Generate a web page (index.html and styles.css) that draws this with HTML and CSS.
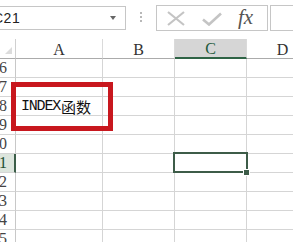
FILE: index.html
```html
<!DOCTYPE html>
<html>
<head>
<meta charset="utf-8">
<link rel="stylesheet" href="styles.css">
</head>
<body>
<div class="app">
  <div class="fbar">
    <div class="namebox"><span class="name">C21</span><span class="dd"></span></div>
    <div class="dots"><i></i><i></i><i></i></div>
    <div class="btns">
      <svg class="ic-x" width="18" height="15" viewBox="0 0 18 15"><path d="M1 1L17 14M17 1L1 14" stroke="#c4c4c4" stroke-width="2.2" fill="none"/></svg>
      <svg class="ic-ok" width="20" height="14" viewBox="0 0 20 14"><path d="M1 7.5L7 12.5L19 1.5" stroke="#c4c4c4" stroke-width="2.6" fill="none"/></svg>
      <span class="fx">fx</span>
    </div>
    <div class="fin"></div>
  </div>
  <div class="grid">
    <div class="corner"><span class="tri"></span></div>
    <div class="ch">A</div><div class="ch">B</div><div class="ch sel">C</div><div class="ch">D</div>

    <div class="rh"><span>16</span></div><div class="c"></div><div class="c"></div><div class="c"></div><div class="c"></div>
    <div class="rh"><span>17</span></div><div class="c"></div><div class="c"></div><div class="c"></div><div class="c"></div>
    <div class="rh"><span>18</span></div><div class="c txt"><span class="lat">INDEX</span><span class="cjk">函数</span></div><div class="c"></div><div class="c"></div><div class="c"></div>
    <div class="rh"><span>19</span></div><div class="c"></div><div class="c"></div><div class="c"></div><div class="c"></div>
    <div class="rh"><span>20</span></div><div class="c"></div><div class="c"></div><div class="c"></div><div class="c"></div>
    <div class="rh sel"><span>21</span></div><div class="c"></div><div class="c"></div><div class="c active"></div><div class="c"></div>
    <div class="rh"><span>22</span></div><div class="c"></div><div class="c"></div><div class="c"></div><div class="c"></div>
    <div class="rh"><span>23</span></div><div class="c"></div><div class="c"></div><div class="c"></div><div class="c"></div>
    <div class="rh"><span>24</span></div><div class="c"></div><div class="c"></div><div class="c"></div><div class="c"></div>
    <div class="rh"><span>25</span></div><div class="c"></div><div class="c"></div><div class="c"></div><div class="c"></div>
  </div>
  <div class="redbox"></div>
</div>
</body>
</html>
```

FILE: styles.css
```css
html, body {
  margin: 0;
  padding: 0;
  background: #fff;
  overflow: hidden;
}
.app {
  position: relative;
  width: 293px;
  height: 242px;
  overflow: hidden;
}
.fbar {
  height: 39px;
  display: flex;
  align-items: flex-start;
  padding-top: 5px;
  box-sizing: border-box;
}
.namebox {
  flex-shrink: 0;
  margin-left: -10px;
  margin-top: 1px;
  width: 136px;
  height: 24px;
  border: 1px solid #c6c6c6;
  border-left: none;
  box-sizing: border-box;
  display: flex;
  align-items: center;
  font-family: "Liberation Sans", sans-serif;
  font-size: 14px;
  color: #222;
}
.name {
  padding-left: 3px;
  letter-spacing: 0.5px;
}
.dd {
  margin-left: auto;
  margin-right: 9px;
  width: 0;
  height: 0;
  border-left: 3px solid transparent;
  border-right: 3px solid transparent;
  border-top: 4px solid #666;
  margin-top: -1px;
}
.dots {
  margin-left: 14px;
  margin-top: 7px;
  display: flex;
  flex-direction: column;
  gap: 2px;
}
.dots i {
  display: block;
  width: 2px;
  height: 2px;
  background: #b8b8b8;
}
.btns {
  flex-shrink: 0;
  margin-left: 14px;
  width: 112px;
  height: 26px;
  border: 1px solid #c6c6c6;
  box-sizing: border-box;
  display: flex;
  align-items: center;
}
.ic-x {
  margin-left: 10px;
}
.ic-ok {
  margin-left: 17px;
  margin-top: 1px;
}
.fx {
  margin-left: 16px;
  font-family: "Liberation Serif", serif;
  font-style: italic;
  font-size: 21px;
  color: #555;
  line-height: 1;
  margin-top: -2px;
}
.fin {
  margin-left: 2px;
  flex: 1;
  height: 26px;
  border: 1px solid #c6c6c6;
  border-right: none;
  box-sizing: border-box;
}
.grid {
  display: grid;
  grid-template-columns: 16px 87px 72px 72px 72px;
  grid-template-rows: 20px repeat(10, 19px);
  font-family: "Liberation Serif", serif;
}
.grid > div {
  box-sizing: border-box;
  border-right: 1px solid #d5d5d5;
  border-bottom: 1px solid #d5d5d5;
}
.corner {
  position: relative;
  border-bottom: 1px solid #ababab !important;
  border-right: 1px solid #d0d0d0 !important;
}
.tri {
  position: absolute;
  right: 3px;
  bottom: 4px;
  width: 0;
  height: 0;
  border-left: 7px solid transparent;
  border-bottom: 7px solid #dcdcdc;
}
.ch {
  display: flex;
  align-items: center;
  justify-content: center;
  font-size: 16px;
  color: #333;
  border-bottom: 1px solid #ababab !important;
  border-right: 1px solid #dadada !important;
  padding-top: 2px;
}
.ch.sel {
  background: #d6d6d6;
  color: #225a3c;
  border-bottom: 2px solid #2f6446 !important;
}
.rh {
  display: flex;
  justify-content: flex-end;
  align-items: center;
  overflow: hidden;
  padding-right: 8px;
  font-size: 16px;
  color: #444;
  white-space: nowrap;
  border-right: 1px solid #c8c8c8 !important;
}
.rh.sel {
  background: #dce5dd;
  color: #1f4f33;
  border-right: 2px solid #3b5d48 !important;
  padding-right: 7px;
}
.c {
  position: relative;
}
.txt {
  display: flex;
  align-items: center;
  padding-left: 5px;
  white-space: nowrap;
  color: #111;
  padding-top: 1px;
}
.lat {
  font-family: "Liberation Mono", monospace;
  font-size: 15px;
  letter-spacing: -1.2px;
  margin-right: 1px;
}
.cjk {
  font-family: "Noto Sans CJK SC", sans-serif;
  font-size: 15px;
  line-height: 1;
}
.active::after {
  content: "";
  position: absolute;
  left: -2px;
  top: -2px;
  right: -2px;
  bottom: -1px;
  border: 2px solid #3d5c48;
}
.active::before {
  content: "";
  position: absolute;
  right: -4px;
  bottom: -4px;
  width: 5px;
  height: 5px;
  background: #3d5c48;
  border: 1px solid #fff;
  z-index: 2;
}
.redbox {
  position: absolute;
  left: 11px;
  top: 82px;
  width: 102px;
  height: 49px;
  border: 5px solid #c8171e;
  box-sizing: border-box;
}
```
